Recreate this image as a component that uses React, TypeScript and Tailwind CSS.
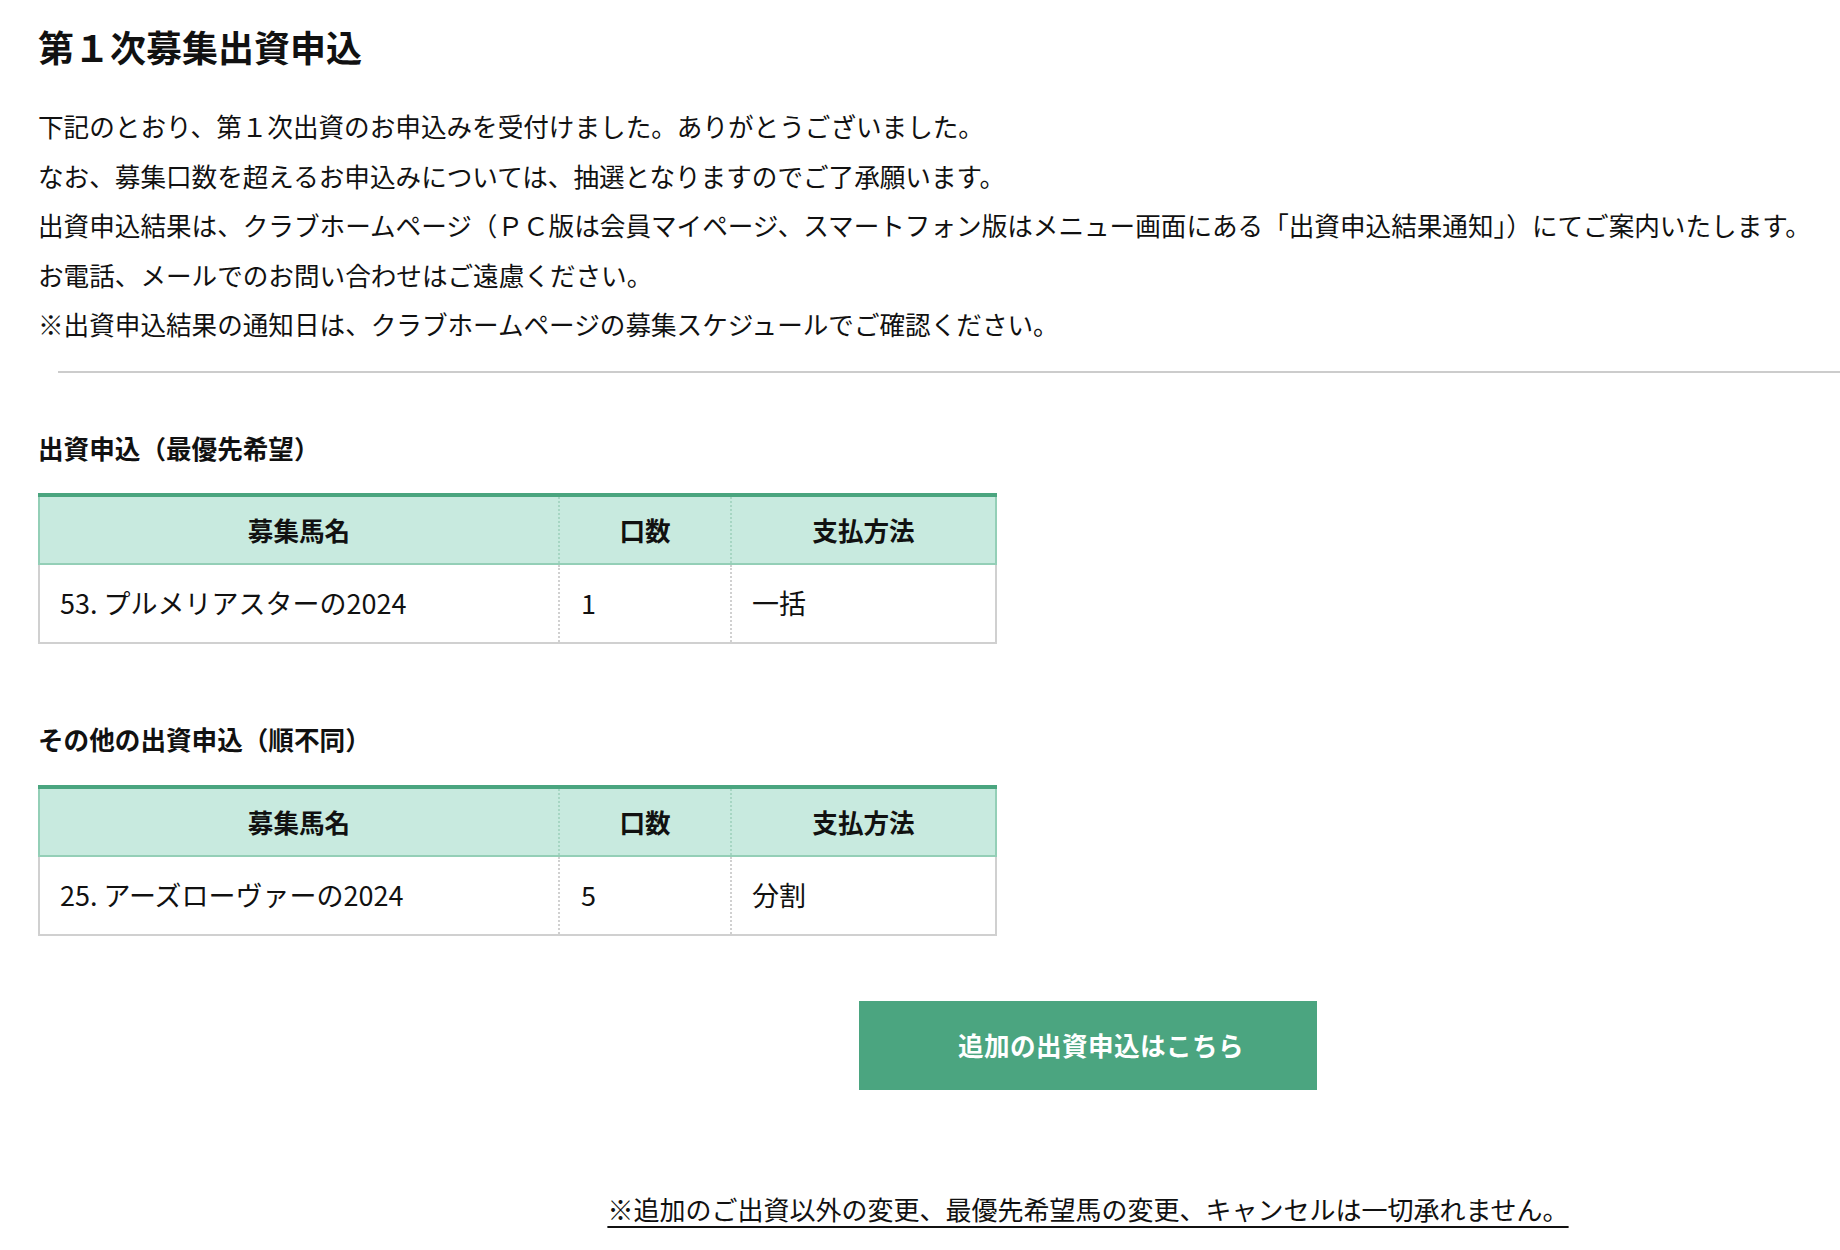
import React from 'react';

type Entry = { horse: string; units: string; payment: string };

const FONT = { fontFamily: '"Noto Sans CJK JP", "Noto Sans", sans-serif' };

const EntryTable: React.FC<{ rows: Entry[] }> = ({ rows }) => (
  <div className="w-[959px] border-t-4 border-[#4aa57f]">
    {/* header */}
    <div className="grid h-[68px] grid-cols-[518px_172px_1fr] border-x-2 border-b-2 border-[#94cfb7] bg-[#c8eadf] text-[25.6px] font-bold">
      <div className="flex items-center justify-center">募集馬名</div>
      <div className="flex items-center justify-center border-l-2 border-dotted border-[#a6d6c3]">口数</div>
      <div className="flex items-center justify-center border-l-2 border-dotted border-[#a6d6c3]">支払方法</div>
    </div>
    {/* body */}
    {rows.map((r) => (
      <div
        key={r.horse}
        className="grid h-[79px] grid-cols-[518px_172px_1fr] border-x-2 border-b-2 border-[#d0d0d0] text-[27px]"
      >
        <div className="flex items-center pl-[20px]">{r.horse}</div>
        <div className="flex items-center border-l-2 border-dotted border-[#d0d0d0] pl-[21px]">{r.units}</div>
        <div className="flex items-center border-l-2 border-dotted border-[#d0d0d0] pl-[20px]">{r.payment}</div>
      </div>
    ))}
  </div>
);

export default function App() {
  const lines = [
    '下記のとおり、第１次出資のお申込みを受付けました。ありがとうございました。',
    'なお、募集口数を超えるお申込みについては、抽選となりますのでご了承願います。',
    '出資申込結果は、クラブホームページ（ＰＣ版は会員マイページ、スマートフォン版はメニュー画面にある「出資申込結果通知」）にてご案内いたします。',
    'お電話、メールでのお問い合わせはご遠慮ください。',
    '※出資申込結果の通知日は、クラブホームページの募集スケジュールでご確認ください。',
  ];

  return (
    <div className="min-h-screen bg-white pl-[38px] pt-[19px] text-[#111]" style={FONT}>
      <h1 className="text-[36px] font-bold leading-[54px]">第１次募集出資申込</h1>

      <div className="mt-[28px] text-[25.6px] leading-[49.6px]">
        {lines.map((l) => (
          <p key={l} className="whitespace-nowrap">{l}</p>
        ))}
      </div>

      <div className="ml-[20px] mt-[22px] h-[2px] bg-[#cccccc]" />

      <h2 className="mt-[55px] text-[25.6px] font-bold leading-[40px]">出資申込（最優先希望）</h2>
      <div className="mt-[25px]">
        <EntryTable rows={[{ horse: '53. プルメリアスターの2024', units: '1', payment: '一括' }]} />
      </div>

      <h2 className="mt-[75px] text-[25.6px] font-bold leading-[40px]">その他の出資申込（順不同）</h2>
      <div className="mt-[26px]">
        <EntryTable rows={[{ horse: '25. アーズローヴァーの2024', units: '5', payment: '分割' }]} />
      </div>

      {/* action + note, centred in the right-hand content area */}
      <div className="ml-[298px] flex flex-col items-center">
        <button className="mt-[65px] flex h-[89px] w-[458px] items-center justify-center bg-[#4ba580] pl-[26px] text-[25.6px] font-bold tracking-[0.4px] text-white">
          追加の出資申込はこちら
        </button>
        <p className="mt-[99px] text-[26px] leading-[40px] underline underline-offset-[6px]">
          ※追加のご出資以外の変更、最優先希望馬の変更、キャンセルは一切承れません。
        </p>
      </div>
    </div>
  );
}
